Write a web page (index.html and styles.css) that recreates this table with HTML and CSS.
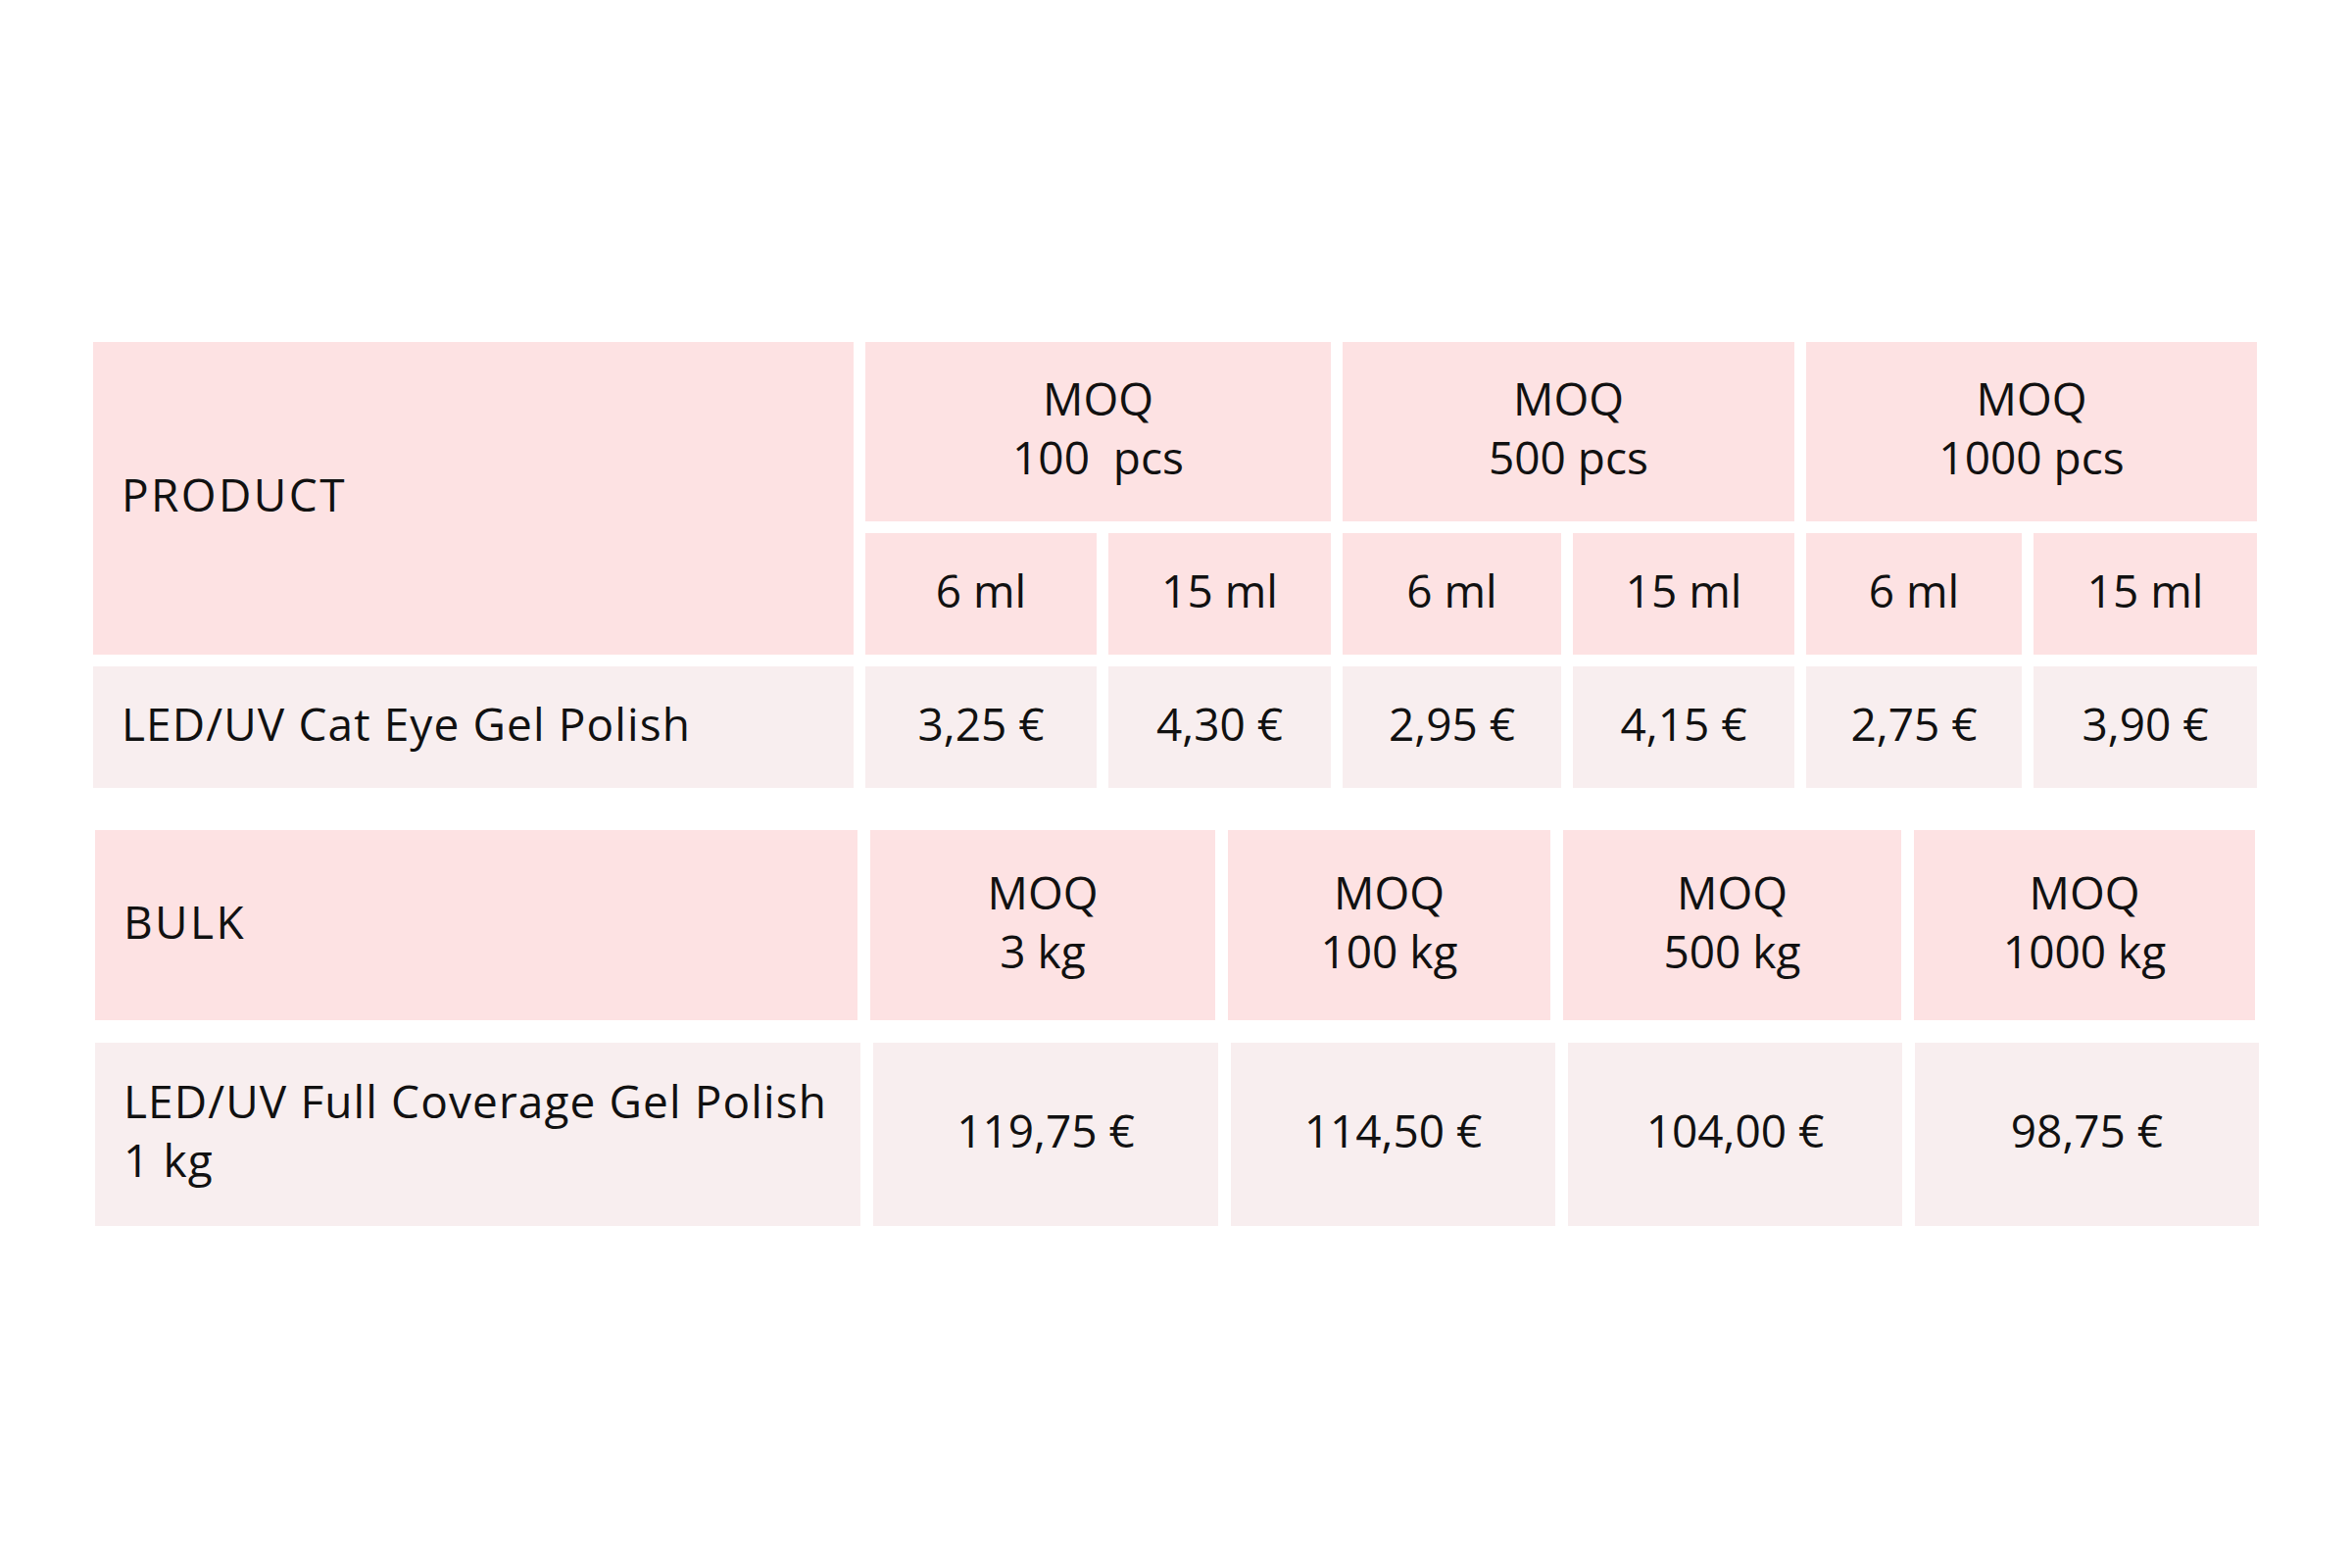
FILE: index.html
```html
<!DOCTYPE html>
<html lang="en">
<head>
<meta charset="utf-8">
<title>Price table</title>
<link rel="stylesheet" href="styles.css">
</head>
<body>
<main class="page">
  <section class="table-pcs">
    <div class="cell head label title span-rows">PRODUCT</div>
    <div class="cell head center span-cols">MOQ<br>100&nbsp; pcs</div>
    <div class="cell head center span-cols">MOQ<br>500 pcs</div>
    <div class="cell head center span-cols">MOQ<br>1000 pcs</div>
    <div class="cell head center">6 ml</div>
    <div class="cell head center">15 ml</div>
    <div class="cell head center">6 ml</div>
    <div class="cell head center">15 ml</div>
    <div class="cell head center">6 ml</div>
    <div class="cell head center">15 ml</div>
    <div class="cell data label name">LED/UV Cat Eye Gel Polish</div>
    <div class="cell data center">3,25 €</div>
    <div class="cell data center">4,30 €</div>
    <div class="cell data center">2,95 €</div>
    <div class="cell data center">4,15 €</div>
    <div class="cell data center">2,75 €</div>
    <div class="cell data center">3,90 €</div>
  </section>

  <section class="table-bulk">
    <div class="bulk-row bulk-head">
      <div class="cell head label title">BULK</div>
      <div class="cell head center">MOQ<br>3 kg</div>
      <div class="cell head center">MOQ<br>100 kg</div>
      <div class="cell head center">MOQ<br>500 kg</div>
      <div class="cell head center">MOQ<br>1000 kg</div>
    </div>
    <div class="bulk-row bulk-data">
      <div class="cell data label name">LED/UV Full Coverage Gel Polish<br>1 kg</div>
      <div class="cell data center">119,75 €</div>
      <div class="cell data center">114,50 €</div>
      <div class="cell data center">104,00 €</div>
      <div class="cell data center">98,75 €</div>
    </div>
  </section>
</main>
</body>
</html>
```

FILE: styles.css
```css
html, body {
  margin: 0;
  padding: 0;
  background: #ffffff;
}

body {
  width: 2400px;
  height: 1600px;
  font-family: "Open Sans", "Liberation Sans", sans-serif;
  font-size: 46px;
  line-height: 60px;
  color: #111111;
}

.page {
  padding: 349px 0 0 95px;
}

.cell {
  display: flex;
  align-items: center;
  padding-bottom: 9px;
  box-sizing: border-box;
}

.head {
  background: #fde2e3;
}

.data {
  background: #f8eeef;
}

.label {
  padding-left: 29px;
}

.title {
  letter-spacing: 2.4px;
}

.name {
  letter-spacing: 1.1px;
}

.center {
  justify-content: center;
  text-align: center;
}

.table-pcs {
  display: grid;
  grid-template-columns: 776px 236px 227px 223px 226px 220px 228px;
  grid-template-rows: 183px 124px 124px;
  column-gap: 12px;
  row-gap: 12px;
}

.span-rows {
  grid-row: span 2;
}

.span-cols {
  grid-column: span 2;
}

.table-bulk {
  margin: 43px 0 0 2px;
  display: flex;
  flex-direction: column;
  gap: 23px;
}

.bulk-row {
  display: grid;
  column-gap: 13px;
}

.bulk-head {
  grid-template-columns: 778px 352px 329px 345px 348px;
  height: 194px;
}

.bulk-data {
  grid-template-columns: 781px 352px 331px 341px 351px;
  height: 187px;
}
```
